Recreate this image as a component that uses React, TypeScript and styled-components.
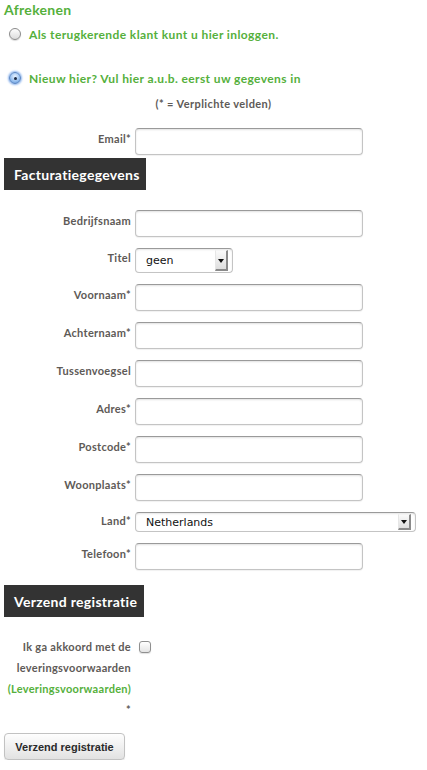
import * as React from 'react';
import styled, {createGlobalStyle} from 'styled-components';

const GlobalStyle = createGlobalStyle`
  body {
    margin: 0;
    background: #fff;
    font-family: Lato, "DejaVu Sans", sans-serif;
  }
`;

const green = '#55b03c';
const labelGrey = '#5e5a57';

const Page = styled.div`
  width: 427px;
  padding: 0 4px;
  box-sizing: border-box;
`;

const Title = styled.h2`
  margin: 0;
  padding-top: 1px;
  font-size: 14px;
  line-height: 18px;
  font-weight: bold;
  color: ${green};
  letter-spacing: 0.3px;
`;

const RadioRow = styled.label<{ gap: number }>`
  display: flex;
  align-items: center;
  gap: 8px;
  padding-left: 5px;
  margin-top: ${p => p.gap}px;
  height: 14px;
  font-size: 12px;
  font-weight: bold;
  color: ${green};
  letter-spacing: 0.4px;
`;

const Radio = styled.span<{ checked?: boolean }>`
  position: relative;
  width: 12px;
  height: 12px;
  border-radius: 50%;
  box-sizing: border-box;
  flex: none;
  border: 1px solid ${p => (p.checked ? '#5a86c4' : '#8b8b8b')};
  background: ${p => p.checked
    ? 'radial-gradient(circle at 50% 35%, #e8f2ff 0%, #9cc3f0 55%, #5d93d8 100%)'
    : 'linear-gradient(#fdfdfd, #dcdcdc)'};
  box-shadow: ${p => (p.checked ? '0 0 2px 1px #8fb6ee' : '0 1px 1px rgba(0,0,0,0.15)')};
  &::after {
    content: '';
    display: ${p => (p.checked ? 'block' : 'none')};
    position: absolute;
    left: 3.5px;
    top: 3.5px;
    width: 3px;
    height: 3px;
    border-radius: 50%;
    background: #1d2b44;
  }
`;

const Note = styled.div`
  text-align: center;
  margin: 12px 0 18px;
  font-size: 11px;
  line-height: 13px;
  font-weight: bold;
  color: ${labelGrey};
  letter-spacing: 0.4px;
`;

const Row = styled.div<{ mb?: number }>`
  display: flex;
  align-items: flex-start;
  gap: 4px;
  margin-bottom: ${p => p.mb ?? 11}px;
`;

const Label = styled.div<{ pt?: number }>`
  width: 127px;
  flex: none;
  text-align: right;
  padding-top: ${p => p.pt ?? 3}px;
  font-size: 11px;
  line-height: 16px;
  font-weight: bold;
  color: ${labelGrey};
  letter-spacing: 0.3px;
`;

const Input = styled.input`
  width: 228px;
  height: 27px;
  box-sizing: border-box;
  margin: 0;
  border: 1px solid #c4c4c4;
  border-top-color: #9a9a9a;
  border-radius: 4px;
  box-shadow: inset 0 1px 2px rgba(0,0,0,0.12), 0 1px 1px rgba(0,0,0,0.06);
  background: #fff;
`;

const Select = styled.div<{ w: number; h: number }>`
  display: flex;
  align-items: center;
  justify-content: space-between;
  width: ${p => p.w}px;
  height: ${p => p.h}px;
  box-sizing: border-box;
  padding: 0 4px 0 10px;
  border: 1px solid #c4c4c4;
  border-top-color: #9a9a9a;
  border-radius: 4px;
  box-shadow: inset 0 1px 2px rgba(0,0,0,0.1);
  font-family: "DejaVu Sans", sans-serif;
  font-size: 11px;
  color: #111;
`;

const Arrow = styled.span<{ h: number }>`
  display: flex;
  align-items: center;
  justify-content: center;
  width: 13px;
  height: ${p => p.h}px;
  box-sizing: border-box;
  border-left: 1px solid #e6e6e6;
  border-top: 1px solid #f4f4f4;
  border-right: 2px solid #8a8a8a;
  border-bottom: 2px solid #8a8a8a;
  background: linear-gradient(#fafafa, #dedede);
  &::after {
    content: '';
    border-left: 3px solid transparent;
    border-right: 3px solid transparent;
    border-top: 4px solid #111;
    margin-top: 1px;
  }
`;

const Bar = styled.div<{ w: number; mb: number }>`
  width: ${p => p.w}px;
  height: 32px;
  box-sizing: border-box;
  padding-left: 10px;
  display: flex;
  align-items: center;
  background: #333;
  color: #fff;
  font-size: 14px;
  font-weight: bold;
  letter-spacing: 0.3px;
  margin-bottom: ${p => p.mb}px;
`;

const AgreeRow = styled.div`
  display: flex;
  align-items: flex-start;
  gap: 8px;
  margin-bottom: 13px;
`;

const AgreeText = styled.div`
  width: 127px;
  text-align: right;
  font-size: 11px;
  line-height: 21px;
  font-weight: bold;
  color: ${labelGrey};
  letter-spacing: 0.3px;
  a {
    color: ${green};
    text-decoration: none;
  }
`;

const Check = styled.span`
  width: 12px;
  height: 12px;
  margin-top: 5px;
  box-sizing: border-box;
  border: 1px solid #8f8f8f;
  border-radius: 3px;
  background: linear-gradient(#fff, #e4e4e4);
  box-shadow: 0 1px 1px rgba(0,0,0,0.12);
`;

const Button = styled.button`
  width: 121px;
  height: 27px;
  margin: 0;
  padding: 0;
  border: 1px solid #c2c2c2;
  border-radius: 4px;
  background: linear-gradient(#fefefe, #e2e2e2);
  box-shadow: 0 1px 1px rgba(0,0,0,0.1);
  font-family: "Liberation Sans", Arial, sans-serif;
  font-weight: bold;
  font-size: 11px;
  color: #2a2a2a;
`;

const fields = [
  'Voornaam*',
  'Achternaam*',
  'Tussenvoegsel',
  'Adres*',
  'Postcode*',
  'Woonplaats*',
];

const App = () => {
  return (
    <Page>
      <GlobalStyle/>
      <Title>Afrekenen</Title>
      <RadioRow gap={8}>
        <Radio/>Als terugkerende klant kunt u hier inloggen.
      </RadioRow>
      <RadioRow gap={30}>
        <Radio checked/>Nieuw hier? Vul hier a.u.b. eerst uw gegevens in
      </RadioRow>
      <Note>(* = Verplichte velden)</Note>

      <Row mb={3}>
        <Label>Email*</Label>
        <Input/>
      </Row>
      <Bar w={142} mb={20}>Facturatiegegevens</Bar>

      <Row>
        <Label>Bedrijfsnaam</Label>
        <Input/>
      </Row>
      <Row>
        <Label pt={2}>Titel</Label>
        <Select w={98} h={25}>geen<Arrow h={21}/></Select>
      </Row>
      {fields.map(label => (
        <Row key={label}>
          <Label>{label}</Label>
          <Input/>
        </Row>
      ))}
      <Row>
        <Label pt={1}>Land*</Label>
        <Select w={281} h={20}>Netherlands<Arrow h={16}/></Select>
      </Row>
      <Row mb={15}>
        <Label>Telefoon*</Label>
        <Input/>
      </Row>

      <Bar w={140} mb={19}>Verzend registratie</Bar>

      <AgreeRow>
        <AgreeText>
          Ik ga akkoord met de leveringsvoorwaarden <a href="#">(Leveringsvoorwaarden)</a> *
        </AgreeText>
        <Check/>
      </AgreeRow>
      <Button>Verzend registratie</Button>
    </Page>
  );
};

export default App;
